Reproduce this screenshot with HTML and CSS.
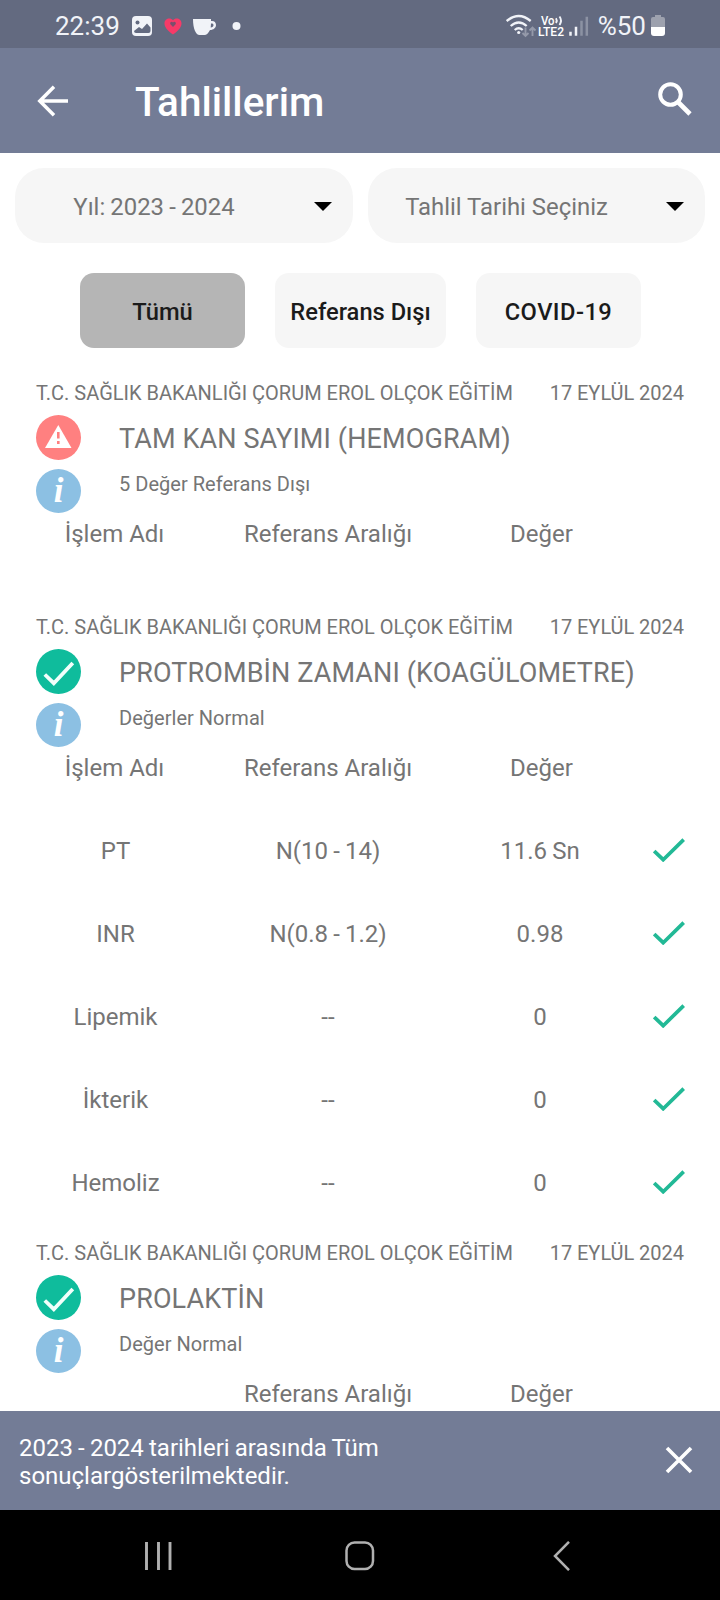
FILE: index.html
```html
<!DOCTYPE html>
<html lang="tr">
<head>
<meta charset="utf-8">
<title>Tahlillerim</title>
<link rel="stylesheet" href="styles.css">
</head>
<body>
<svg class="defs" width="0" height="0" aria-hidden="true">
  <symbol id="ok" viewBox="0 0 45 45"><circle cx="22.5" cy="22.5" r="22.5" fill="#0fbc9c"/><path d="M8.800 25.500l9 8.700L36.800 14" fill="none" stroke="#f2fffb" stroke-width="3.800"/></symbol>
  <symbol id="warn" viewBox="0 0 45 45"><circle cx="22.5" cy="22.5" r="22.5" fill="#ff8080"/><path d="M22.300 10L35.500 33H9z" fill="#fff"/><path d="M22.300 17v6.500M22.300 26v3" stroke="#ff8080" stroke-width="2.600"/></symbol>
  <symbol id="tick" viewBox="0 0 32 24"><path d="M1.200 13l9 8.700L30.700 1.600" fill="none" stroke="#22b996" stroke-width="3.700"/></symbol>
</svg>
<div class="screen">
  <div class="status">
    <span class="clock">22:39</span>
    <svg class="status-left" width="112" height="24" viewBox="0 0 112 24">
      <rect x="1" y="2" width="20" height="20" rx="4" fill="#f1f3f8"/>
      <circle cx="6.5" cy="8.5" r="2" fill="#636a80"/>
      <path d="M3 17l5-4 3 2 5-5.500 3.500 4v3.500q0 2-2 2H5q-2 0-2-2z" fill="#636a80"/>
      <path d="M42 20.500C36 16 33.500 13 33.500 9.500 33.500 4.500 39.500 3 42 6.500c2.500-3.500 8.500-2 8.500 3 0 3.500-2.500 6.500-8.500 11z" fill="#f63a68"/>
      <path d="M42 13l-2.600-2.800a1.500 1.500 0 0 1 2.600-1.700 1.500 1.500 0 0 1 2.600 1.700z" fill="#7a4f6c"/>
      <path d="M62 5h18v2c3-.5 5 1.200 5 4s-2.500 5-6 5c-1.500 3-3.500 5-5.500 5h-5C65 21 62 15 62 5z" fill="#f1f3f8"/>
      <path d="M80 9.500c1.700-.2 2.500.5 2.500 1.700s-1 2.300-2.800 2.300z" fill="#636a80"/>
      <circle cx="105.500" cy="12" r="4" fill="#f1f3f8"/>
    </svg>
    <div class="status-right">
      <svg width="84" height="26" viewBox="0 0 84 26">
        <g fill="none" stroke="#f1f3f8" stroke-width="2.300">
          <path d="M.7 8q12-10 24 0M4.700 13q8-7 16 0M8.700 17q4-3.500 8 0"/>
        </g>
        <circle cx="12.700" cy="19.500" r="1.600" fill="#f1f3f8"/>
        <path d="M19.500 14.500v8.500M16.500 20l3 3 3-3M26.500 23v-8.500M23.500 17.500l3-3 3 3" fill="none" stroke="#9499a9" stroke-width="1.900"/>
        <text x="35" y="11.800" class="volte" textLength="13.500" lengthAdjust="spacingAndGlyphs">Vo</text>
        <path d="M50 5.300q1.500 2.300 0 4.700M53.500 3.500q3 4 0 8.500" fill="none" stroke="#f1f3f8" stroke-width="1.900"/>
        <text x="32" y="23.200" class="volte" textLength="26" lengthAdjust="spacingAndGlyphs">LTE2</text>
        <path d="M64.500 22.700v-4M70 22.700v-9" stroke="#f1f3f8" stroke-width="2.500"/>
        <path d="M75.500 22.700v-15M80.800 22.700v-19" stroke="#8c92a3" stroke-width="2.500"/>
      </svg>
      <span class="percent">%50</span>
      <svg width="14" height="22" viewBox="0 0 14 22">
        <path d="M4 0h6v2h2q2 0 2 2v8H0V4q0-2 2-2h2z" fill="#9da1ae"/>
        <path d="M0 12h14v6q0 3-3 3H3q-3 0-3-3z" fill="#fff"/>
      </svg>
    </div>
  </div>
  <header class="appbar">
    <svg class="back" width="32" height="32" viewBox="0 0 32 32"><path d="M18 1.800L3.800 16 18 30.200M4 16h28" fill="none" stroke="#fff" stroke-width="3.500"/></svg>
    <h1 class="heading">Tahlillerim</h1>
    <svg class="search" width="34" height="34" viewBox="0 0 34 34"><circle cx="12.500" cy="12.500" r="10.300" fill="none" stroke="#fff" stroke-width="4"/><path d="M20 20l12 12" stroke="#fff" stroke-width="4.600"/></svg>
  </header>
  <main class="content">
    <div class="filters">
      <div class="pill"><span class="pill-text spaced">Yıl: 2023 - 2024</span><span class="caret"></span></div>
      <div class="pill"><span class="pill-text">Tahlil Tarihi Seçiniz</span><span class="caret"></span></div>
    </div>
    <div class="chips">
      <div class="chip active">Tümü</div>
      <div class="chip wide">Referans Dışı</div>
      <div class="chip covid">COVID-19</div>
    </div>

    <section class="test collapsed">
      <div class="source"><span>T.C. SAĞLIK BAKANLIĞI ÇORUM EROL OLÇOK EĞİTİM</span><span class="date">17 EYLÜL 2024</span></div>
      <div class="summary">
        <div class="badges"><svg width="45" height="45"><use href="#warn"/></svg><span class="info">i</span></div>
        <div class="names"><div class="name">TAM KAN SAYIMI (HEMOGRAM)</div><div class="state">5 Değer Referans Dışı</div></div>
      </div>
      <div class="cols"><span>İşlem Adı</span><span>Referans Aralığı</span><span>Değer</span></div>
    </section>

    <section class="test">
      <div class="source"><span>T.C. SAĞLIK BAKANLIĞI ÇORUM EROL OLÇOK EĞİTİM</span><span class="date">17 EYLÜL 2024</span></div>
      <div class="summary">
        <div class="badges"><svg width="45" height="45"><use href="#ok"/></svg><span class="info">i</span></div>
        <div class="names"><div class="name">PROTROMBİN ZAMANI (KOAGÜLOMETRE)</div><div class="state">Değerler Normal</div></div>
      </div>
      <div class="cols"><span>İşlem Adı</span><span>Referans Aralığı</span><span>Değer</span></div>
      <div class="rows">
        <div class="row"><span>PT</span><span>N(10 - 14)</span><span>11.6 Sn</span><svg width="32" height="24"><use href="#tick"/></svg></div>
        <div class="row"><span>INR</span><span>N(0.8 - 1.2)</span><span>0.98</span><svg width="32" height="24"><use href="#tick"/></svg></div>
        <div class="row"><span>Lipemik</span><span>--</span><span>0</span><svg width="32" height="24"><use href="#tick"/></svg></div>
        <div class="row"><span>İkterik</span><span>--</span><span>0</span><svg width="32" height="24"><use href="#tick"/></svg></div>
        <div class="row"><span>Hemoliz</span><span>--</span><span>0</span><svg width="32" height="24"><use href="#tick"/></svg></div>
      </div>
    </section>

    <section class="test">
      <div class="source"><span>T.C. SAĞLIK BAKANLIĞI ÇORUM EROL OLÇOK EĞİTİM</span><span class="date">17 EYLÜL 2024</span></div>
      <div class="summary">
        <div class="badges"><svg width="45" height="45"><use href="#ok"/></svg><span class="info">i</span></div>
        <div class="names"><div class="name">PROLAKTİN</div><div class="state">Değer Normal</div></div>
      </div>
      <div class="cols"><span></span><span>Referans Aralığı</span><span>Değer</span></div>
    </section>
  </main>
  <div class="snackbar">
    <p class="message"><span class="spaced">2023 - 2024 tarihleri arasında Tüm</span><br>sonuçlargösterilmektedir.</p>
    <svg width="28" height="28" viewBox="0 0 28 28"><path d="M2 2l24 24M26 2l-24 24" stroke="#fff" stroke-width="3.600"/></svg>
  </div>
  <nav class="navbar">
    <svg class="nav-recents" width="28" height="30" viewBox="0 0 28 30"><path d="M2.500 1v28M14.500 1v28M26 1v28" stroke="#b0b0b0" stroke-width="2.900"/></svg>
    <svg class="nav-home" width="30" height="30" viewBox="0 0 30 30"><rect x="1.500" y="1.500" width="26.500" height="26.500" rx="8" fill="none" stroke="#b0b0b0" stroke-width="2.500"/></svg>
    <svg class="nav-back" width="17" height="30" viewBox="0 0 17 30"><path d="M16 .8L2 15l14 14.200" fill="none" stroke="#b0b0b0" stroke-width="2.500"/></svg>
  </nav>
</div>
</body>
</html>
```

FILE: styles.css
```css
* { box-sizing: border-box; }
body { margin: 0; font-family: Roboto, "Noto Sans", sans-serif; color: #757575; background: #fff; }
svg { display: block; flex: none; }
.defs { position: absolute; }
.screen { width: 720px; height: 1600px; display: flex; flex-direction: column; overflow: hidden; }
.spaced { word-spacing: -.8px; }

.status { flex: none; height: 48px; background: #636a80; color: #f1f3f8; display: flex; align-items: center; padding: 4px 55px 0; }
.clock { font-size: 26px; line-height: 30px; width: 76px; }
.status-right { margin-left: auto; display: flex; align-items: center; }
.percent { font-size: 26px; line-height: 30px; margin: 0 5px 0 8px; }
.volte { font-family: Roboto, sans-serif; font-size: 12.5px; font-weight: 500; fill: #fff; }

.appbar { flex: none; height: 105px; background: #737c96; color: #fff; display: flex; align-items: center; padding: 0 28px 0 36px; }
.heading { margin: 2px 0 0 67px; font-size: 40.5px; font-weight: 500; line-height: 48px; }
.search { margin: -3px 0 0 auto; }

.content { flex: 1; min-height: 0; overflow: hidden; padding-top: 15px; }
.filters { display: grid; grid-template-columns: 338px 337px; gap: 15px; padding-left: 15px; }
.pill { height: 75px; border-radius: 29px; background: #f6f6f6; display: flex; align-items: center; padding: 2px 21px 0 0; }
.pill-text { flex: 1; text-align: center; font-size: 23.9px; line-height: 28px; padding-right: 21px; }
.caret { border: 9px solid transparent; border-top-color: #000; border-bottom: 0; }
.chips { display: flex; justify-content: center; gap: 30px; margin-top: 30px; }
.chip { width: 165px; height: 75px; border-radius: 14px; background: #f6f6f6; color: #1b1b1b; font-size: 23.7px; font-weight: 500; display: flex; align-items: center; justify-content: center; padding: 2px 0 0 1px; }
.chip.wide { width: 171px; }
.chip.active { background: #b5b5b5; }
.chip.covid { letter-spacing: .45px; }

.chips + .test { margin-top: 33px; }
.test { margin-bottom: 17px; }
.collapsed { margin-bottom: 67px; }
.source { display: flex; justify-content: space-between; padding: 0 36px; font-size: 20px; line-height: 24px; white-space: nowrap; }
.date { word-spacing: -.3px; }
.summary { display: flex; margin-top: 10px; padding-left: 36px; }
.badges { display: flex; flex-direction: column; gap: 9px; }
.info { width: 45px; height: 44px; border-radius: 50%; background: #8cc0e3; color: #fff; font: italic bold 35px/44px "Liberation Serif", serif; text-align: center; }
.names { margin-left: 38px; }
.name { font-size: 27px; line-height: 32px; letter-spacing: .12px; margin-top: 8px; white-space: nowrap; }
.state { font-size: 20px; line-height: 24px; letter-spacing: .03px; margin-top: 17px; }
.cols { display: grid; grid-template-columns: 211px 216px 211px; margin-top: 7px; padding-left: 9px; height: 28px; font-size: 24px; line-height: 28px; text-align: center; }
.rows { margin-top: 27px; }
.row { display: grid; grid-template-columns: 213px 212px 212px 32px; align-items: center; padding-left: 9px; height: 83px; font-size: 24px; line-height: 28px; word-spacing: -.8px; text-align: center; }
.row svg { margin: -2px 0 0 7px; }

.snackbar { flex: none; height: 99px; background: #737c96; color: #fff; display: flex; align-items: center; justify-content: space-between; padding: 3px 27px 0 19px; }
.snackbar svg { margin-top: -4px; }
.message { margin: 0; font-size: 24px; line-height: 28px; }
.navbar { flex: none; height: 90px; background: #000; display: flex; align-items: center; padding: 2px 0 0 144px; }
.nav-home { margin-left: 173px; }
.nav-back { margin-left: 178px; }
```
